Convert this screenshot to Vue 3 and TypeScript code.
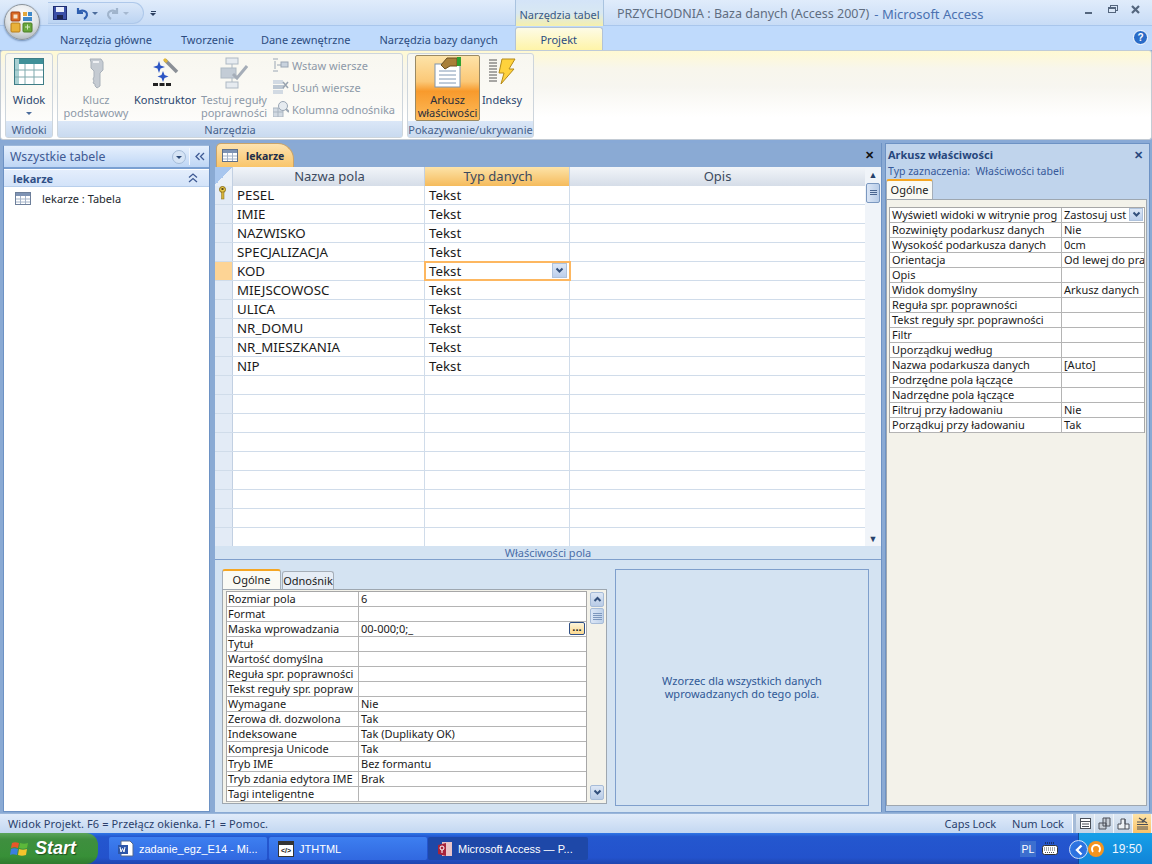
<template>
  <div class="app">
    <header class="titlebar">
      <div class="qat">
        <svg width="14" height="14" viewBox="0 0 14 14"><rect x="0.5" y="0.5" width="13" height="13" fill="#3a4fa8" stroke="#1e2c70"/><rect x="3" y="1" width="8" height="5" fill="#e8eefc"/><rect x="4" y="9" width="6" height="4" fill="#1c2450"/></svg>
        <svg class="undo" width="14" height="14" viewBox="0 0 14 14"><path d="M3 2v5h5M3 7c2-3 6-3 8-1 2 2 1 5-2 7" fill="none" stroke="#2f5fb0" stroke-width="2.2"/></svg>
        <span class="caret"></span>
        <svg class="undo" width="14" height="14" viewBox="0 0 14 14"><path d="M11 2v5H6M11 7C9 4 5 4 3 6c-2 2-1 5 2 7" fill="none" stroke="#a0b4cc" stroke-width="2.2"/></svg>
        <span class="caret dim"></span>
      </div>
      <span class="qat-more"><i></i><b></b></span>
      <div class="context-tab">Narzędzia tabel</div>
      <div class="title">
        <span class="doc-title">PRZYCHODNIA : Baza danych (Access 2007)</span>
        <span class="app-title">- Microsoft Access</span>
      </div>
      <div class="winbtns">
        <svg width="12" height="12" viewBox="0 0 12 12"><rect x="1" y="8" width="7" height="2" fill="#54667e"/></svg>
        <svg width="12" height="12" viewBox="0 0 12 12"><rect x="3.5" y="1.5" width="7" height="5" fill="none" stroke="#54667e"/><rect x="1.5" y="3.5" width="7" height="5" fill="#dbe8f8" stroke="#54667e"/><rect x="1" y="3" width="8" height="2" fill="#54667e"/></svg>
        <svg width="12" height="12" viewBox="0 0 12 12"><path d="M2 2l7 7M9 2L2 9" stroke="#54667e" stroke-width="2.2"/></svg>
      </div>
    </header>

    <nav class="tabsrow">
      <span v-for="t in tabs" :key="t" class="tab">{{ t }}</span>
      <span class="tab active">Projekt</span>
      <svg class="help" width="15" height="15" viewBox="0 0 15 15"><circle cx="7.5" cy="7.5" r="7" fill="#2a6cc8" stroke="#fff"/><text x="7.5" y="11" text-anchor="middle" font-size="10" font-weight="700" fill="#fff" font-family="Liberation Sans">?</text></svg>
    </nav>

    <section class="ribbon">
      <div class="group g-view">
        <div class="group-body">
          <div class="big">
            <svg class="ico" width="30" height="28" viewBox="0 0 30 28"><rect x="0.5" y="0.5" width="29" height="26" fill="#fff" stroke="#3d7d86"/><rect x="1" y="1" width="28" height="5" fill="#3f9098"/><rect x="1" y="1" width="4" height="25" fill="#a9d0d2"/><path d="M1 12h28M1 19h28M11 6v20M20 6v20" stroke="#7fa9ad" fill="none"/></svg>
            <span class="lbl">Widok</span>
            <span class="caret small"></span>
          </div>
        </div>
        <div class="group-name">Widoki</div>
      </div>

      <div class="group g-tools">
        <div class="group-body">
          <div class="big klucz dis">
            <svg class="ico" width="20" height="32" viewBox="0 0 20 32"><path d="M4 2h11l2 3v8l-3 3v13l-3 2-2-2v-2l-2-1 1-2-1-2 1-2v-6l-3-3V5z" fill="#c5cbd2" stroke="#a9b1ba"/><rect x="7" y="4" width="6" height="2" fill="#eef0f3"/></svg>
            <span class="lbl">Klucz<br />podstawowy</span>
          </div>
          <div class="big kons">
            <svg class="ico" width="28" height="32" viewBox="0 0 28 32"><path d="M8 4l1.5 4.5L14 10l-4.5 1.5L8 16l-1.5-4.5L2 10l4.500-1.500zM12 14l1.500 4 4 1.500-4 1.500-1.500 4-1.500-4-4-1.500 4-1.500z" fill="#2c55c4"/><path d="M14 3l12 12" stroke="#8a8f96" stroke-width="3.5"/><path d="M13 2l3 3" stroke="#e2b83a" stroke-width="3"/><rect x="2" y="26" width="5" height="3" fill="#222"/><rect x="8.5" y="26" width="5" height="3" fill="#222"/><rect x="15" y="26" width="5" height="3" fill="#222"/></svg>
            <span class="lbl">Konstruktor</span>
          </div>
          <div class="big test dis">
            <svg class="ico" width="28" height="32" viewBox="0 0 28 32"><rect x="6" y="1" width="12" height="6" fill="#e6ebf0" stroke="#aeb9c4"/><rect x="6" y="25" width="12" height="6" fill="#e6ebf0" stroke="#aeb9c4"/><path d="M12 7v18" stroke="#aeb9c4"/><rect x="1" y="11" width="15" height="10" fill="#c3ccd6" stroke="#aeb9c4"/><path d="M13 17l4 4 10-12" stroke="#a5adb8" stroke-width="3" fill="none"/></svg>
            <span class="lbl">Testuj reguły<br />poprawności</span>
          </div>
          <div class="small-col dis">
            <div class="small-btn">
              <svg width="16" height="16" viewBox="0 0 16 16"><path d="M0 2h5M0 14h5M2 4v8" stroke="#9aa6b4" fill="none"/><path d="M4 8h4" stroke="#9aa6b4"/><rect x="8" y="5" width="7" height="5" fill="#c9d3de" stroke="#9aa6b4"/></svg>
              <span>Wstaw wiersze</span>
            </div>
            <div class="small-btn">
              <svg width="16" height="16" viewBox="0 0 16 16"><rect x="0" y="1" width="10" height="4" fill="#d2dae3"/><rect x="0" y="6" width="11" height="4" fill="#bcc7d3"/><rect x="0" y="11" width="10" height="4" fill="#d2dae3"/><path d="M10 3l5 6M15 3l-5 6" stroke="#98a3af" stroke-width="1.5"/></svg>
              <span>Usuń wiersze</span>
            </div>
            <div class="small-btn">
              <svg width="16" height="16" viewBox="0 0 16 16"><rect x="0" y="7" width="10" height="9" fill="#d2dae3" stroke="#aab5c1"/><path d="M0 11h10M5 7v9" stroke="#aab5c1"/><circle cx="10" cy="5" r="4.5" fill="#e6ebf0" stroke="#9aa6b4"/><path d="M13 8l3 3" stroke="#9aa6b4" stroke-width="2"/></svg>
              <span>Kolumna odnośnika</span>
            </div>
          </div>
        </div>
        <div class="group-name">Narzędzia</div>
      </div>

      <div class="group g-show">
        <div class="group-body">
          <div class="big ark pressed">
            <svg class="ico" width="30" height="32" viewBox="0 0 30 32"><rect x="2" y="8" width="25" height="23" fill="#fff" stroke="#7f95ae"/><path d="M6 15h17M6 19h17M6 23h17M6 27h17" stroke="#8098b4"/><path d="M8 9l6-7h10v8h-7l-5 3z" fill="#a9803a" stroke="#6c5020"/><rect x="24" y="1" width="4" height="9" fill="#2fa02f"/></svg>
            <span class="lbl">Arkusz<br />właściwości</span>
          </div>
          <div class="big indeksy">
            <svg class="ico" width="28" height="32" viewBox="0 0 28 32"><path d="M1 3h8M1 6h8M1 9h8M1 12h8M1 15h8M1 18h8M1 21h8M1 24h8" stroke="#555" fill="none"/><path d="M14 2h13l-6 10h5L13 27l3-11h-5z" fill="#ffd23c" stroke="#b48a1a"/></svg>
            <span class="lbl">Indeksy</span>
          </div>
        </div>
        <div class="group-name">Pokazywanie/ukrywanie</div>
      </div>
    </section>

    <main class="workspace">
      <aside class="nav">
        <div class="nav-head">
          <span>Wszystkie tabele</span>
          <svg class="nav-drop" width="16" height="16" viewBox="0 0 16 16"><circle cx="8" cy="8" r="6.5" fill="#d6e4f5" stroke="#a5bcd8"/><path d="M5 7h6l-3 3z" fill="#2d4a78"/></svg>
          <i class="nav-sep"></i>
          <svg class="nav-chev" width="10" height="9" viewBox="0 0 10 9"><path d="M4.500 1L1 4.500 4.500 8M9 1L5.500 4.500 9 8" fill="none" stroke="#3f5a94" stroke-width="1.300"/></svg>
        </div>
        <div class="nav-group">
          <span>lekarze</span>
          <svg width="10" height="10" viewBox="0 0 10 10"><path d="M1 4.500L5 1l4 3.500M1 9l4-3.500L9 9" fill="none" stroke="#3f5a94" stroke-width="1.300"/></svg>
        </div>
        <div class="nav-item">
          <svg width="16" height="13" viewBox="0 0 16 13"><rect x="0.5" y="0.5" width="15" height="12" fill="#fff" stroke="#6d7f9a"/><rect x="1" y="1" width="14" height="3" fill="#7e93b4"/><path d="M1 7h14M1 10h14M5.500 4v8M10.500 4v8" stroke="#a4b3c8"/></svg>
          <span>lekarze : Tabela</span>
        </div>
      </aside>

      <section class="doc">
        <div class="doc-tabs">
          <div class="doc-tab">
            <svg width="16" height="13" viewBox="0 0 16 13"><rect x="0.5" y="0.5" width="15" height="12" fill="#fff" stroke="#5d6f8a"/><rect x="1" y="1" width="14" height="3" fill="#7e93b4"/><path d="M1 7h14M1 10h14M5.500 4v8M10.500 4v8" stroke="#a4b3c8"/></svg>
            <span>lekarze</span>
          </div>
          <span class="close dark">✕</span>
        </div>

        <div class="grid-wrap">
          <div class="grid">
            <div class="row head">
              <div class="sel corner"></div>
              <div class="c1">Nazwa pola</div>
              <div class="c2 hot">Typ danych</div>
              <div class="c3">Opis</div>
            </div>
            <div v-for="(r, i) in rows" :key="i" class="row" :class="{ current: r === 'KOD' }">
              <div class="sel">
                <svg v-if="i === 0" width="9" height="14" viewBox="0 0 9 14"><circle cx="4.5" cy="3.5" r="3" fill="#e8c94a" stroke="#8a6d1a"/><rect x="3.5" y="6" width="2.5" height="7" fill="#d4b23a" stroke="#8a6d1a" stroke-width="0.5"/><rect x="3.5" y="2" width="2" height="2" fill="#5a4a1a"/></svg>
              </div>
              <div class="c1">{{ r }}</div>
              <div class="c2">
                <span v-if="r">Tekst</span>
                <span v-if="r === 'KOD'" class="combo"><svg width="9" height="7" viewBox="0 0 9 7"><path d="M1.500 1.500l3 3 3-3" fill="none" stroke="#33507c" stroke-width="2"/></svg></span>
              </div>
              <div class="c3"></div>
            </div>
          </div>
          <div class="vscroll">
            <span class="arr">▲</span>
            <span class="thumb"><i></i></span>
            <span class="track"></span>
            <span class="arr">▼</span>
          </div>
        </div>

        <div class="fp-title">Właściwości pola</div>

        <div class="fp">
          <div class="fp-left">
            <div class="tabstrip">
              <span class="ptab on">Ogólne</span>
              <span class="ptab">Odnośnik</span>
            </div>
            <div class="fp-box">
              <div class="ptable">
                <div v-for="p in fieldProps" :key="p[0]" class="prow">
                  <div class="pk">{{ p[0] }}</div>
                  <div class="pv">
                    {{ p[1] }}
                    <span v-if="p[0] === 'Maska wprowadzania'" class="dots">...</span>
                  </div>
                </div>
              </div>
              <div class="pscroll">
                <span class="parr">
                  <svg width="9" height="7" viewBox="0 0 9 7"><path d="M1.500 5l3-3 3 3" fill="none" stroke="#33507c" stroke-width="2"/></svg>
                </span>
                <span class="pthumb"><i></i></span>
                <span class="track"></span>
                <span class="parr">
                  <svg width="9" height="7" viewBox="0 0 9 7"><path d="M1.500 1.500l3 3 3-3" fill="none" stroke="#33507c" stroke-width="2"/></svg>
                </span>
              </div>
            </div>
          </div>
          <div class="hint">Wzorzec dla wszystkich danych<br />wprowadzanych do tego pola.</div>
        </div>
      </section>

      <aside class="sheet">
        <div class="sheet-head">
          <span>Arkusz właściwości</span>
          <span class="close">✕</span>
        </div>
        <div class="sheet-sel">Typ zaznaczenia:&nbsp; Właściwości tabeli</div>
        <div class="sheet-tabs"><span class="ptab on">Ogólne</span></div>
        <div class="sheet-box">
          <div class="stable">
            <div v-for="p in tableProps" :key="p[0]" class="srow">
              <div class="sk">{{ p[0] }}</div>
              <div class="sv">
                {{ p[1] }}
                <span v-if="p[1] === 'Zastosuj ust'" class="combo s"><svg width="9" height="7" viewBox="0 0 9 7"><path d="M1.500 1.500l3 3 3-3" fill="none" stroke="#33507c" stroke-width="2"/></svg></span>
              </div>
            </div>
          </div>
        </div>
      </aside>
    </main>

    <footer class="status">
      <span class="status-text">Widok Projekt. F6 = Przełącz okienka. F1 = Pomoc.</span>
      <span class="lock caps">Caps Lock</span>
      <span class="lock num">Num Lock</span>
      <div class="views">
        <span class="vbtn"><svg width="13" height="13" viewBox="0 0 13 13"><rect x="1.5" y="1.5" width="10" height="10" fill="#fff" stroke="#4a4f58"/><path d="M1 4.500h11M3 7h7M3 9.500h7" stroke="#4a4f58"/></svg></span>
        <span class="vbtn"><svg width="13" height="13" viewBox="0 0 13 13"><path d="M5 1h7v8H8v3H1V6h4z" fill="#c8ced6" stroke="#4a4f58"/><path d="M5 6h3v3H5zM8 1v8" fill="none" stroke="#4a4f58"/></svg></span>
        <span class="vbtn"><svg width="13" height="13" viewBox="0 0 13 13"><path d="M1 12V7h3V2h4v5h4v5z" fill="#eef1f4" stroke="#4a4f58"/><path d="M8 2v10" stroke="#4a4f58"/></svg></span>
        <span class="vbtn on"><svg width="13" height="13" viewBox="0 0 13 13"><path d="M1 5h7M1 7.500h11M1 10h11M1 12h11" stroke="#4a4f58"/><path d="M3 1l8 5M10 1L6 5" stroke="#4a4f58" stroke-width="1.300"/></svg></span>
      </div>
    </footer>

    <footer class="taskbar">
      <div class="start">
        <svg width="20" height="19" viewBox="0 0 20 19"><path d="M2 4c2-1 4-1 7 0l-1 5c-3-1-4-1-7 0z" fill="#e8562a"/><path d="M10 4c3 1 5 1 8 0l-1 5c-3 1-5 1-8 0z" fill="#5cb83a"/><path d="M1 10c2-1 4-1 7 0l-1 6c-3-1-5-1-7 0z" fill="#3b7fe0"/><path d="M9 10c3 1 5 1 8 0l-1 6c-3 1-5 1-8 0z" fill="#f4c42c"/></svg>
        <span>Start</span>
      </div>
      <div class="task">
        <svg width="16" height="17" viewBox="0 0 16 17"><path d="M3 1h9l3 3v12H3z" fill="#fff" stroke="#54698c"/><rect x="0" y="5" width="10" height="9" fill="#2c55a8"/><path d="M2 7l1 5 1.500-3.500L6 12l1-5" stroke="#fff" fill="none"/></svg>
        <span>zadanie_egz_E14 - Mi...</span>
      </div>
      <div class="task">
        <svg width="16" height="16" viewBox="0 0 16 16"><rect x="0.5" y="0.5" width="15" height="15" fill="#fff" stroke="#333"/><rect x="1" y="1" width="14" height="3" fill="#333"/><text x="8" y="12" text-anchor="middle" font-size="7" font-weight="700" fill="#111" font-family="Liberation Sans">&lt;/&gt;</text></svg>
        <span>JTHTML</span>
      </div>
      <div class="task cur">
        <svg width="16" height="16" viewBox="0 0 16 16"><path d="M5 1h10v14H5z" fill="#e9c4c8"/><path d="M1 4l8-2v13l-8-2z" fill="#a8233a"/><circle cx="5" cy="7" r="2" fill="none" stroke="#fff"/><path d="M5 9v3" stroke="#fff"/></svg>
        <span>Microsoft Access — P...</span>
      </div>
      <div class="lang">PL</div>
      <svg class="kbd" width="16" height="13" viewBox="0 0 16 13"><path d="M3 1h10" stroke="#111" stroke-dasharray="1 1"/><rect x="0.5" y="3.5" width="15" height="9" rx="2" fill="#fff" stroke="#333"/><path d="M2 6h12M2 8h12M3 10.500h10" stroke="#555" stroke-dasharray="1 1"/></svg>
      <div class="tray">
        <span class="tray-back"><svg width="10" height="12" viewBox="0 0 10 12"><path d="M7.500 1.500L3 6l4.500 4.500" fill="none" stroke="#fff" stroke-width="2.400"/></svg></span>
        <span class="tray-o"><i></i></span>
        <span class="clock">19:50</span>
      </div>
    </footer>

    <div class="office-btn">
      <svg width="26" height="26" viewBox="0 0 26 26">
        <rect x="2" y="3" width="9" height="9" rx="1" fill="#d96a24" stroke="#a23f10"/>
        <rect x="4.5" y="5.5" width="4" height="4" fill="#f5e2c8"/>
        <rect x="14" y="3" width="4" height="4" fill="#e4a83c"/>
        <rect x="19" y="3" width="4" height="4" fill="#3f88c8"/>
        <rect x="14" y="8" width="9" height="4" fill="#3f88c8"/>
        <rect x="2" y="14" width="9" height="9" rx="1" fill="#e8b13a" stroke="#b87c18"/>
        <rect x="14" y="14" width="9" height="9" rx="1" fill="#69a83c" stroke="#4a7c24"/>
        <path d="M16 18h5M18.500 15.500v5" stroke="#d4eac0"/>
      </svg>
    </div>
  </div>
</template>

<script setup lang="ts">
const tabs: string[] = [
  "Narzędzia główne",
  "Tworzenie",
  "Dane zewnętrzne",
  "Narzędzia bazy danych",
];

const rows: string[] = [
  "PESEL", "IMIE", "NAZWISKO", "SPECJALIZACJA", "KOD",
  "MIEJSCOWOSC", "ULICA", "NR_DOMU", "NR_MIESZKANIA", "NIP",
  "", "", "", "", "", "", "", "", "",
];

// labels are written as far as the narrow columns show them
const fieldProps: [string, string][] = [
  ["Rozmiar pola", "6"],
  ["Format", ""],
  ["Maska wprowadzania", "00-000;0;_"],
  ["Tytuł", ""],
  ["Wartość domyślna", ""],
  ["Reguła spr. poprawności", ""],
  ["Tekst reguły spr. popraw", ""],
  ["Wymagane", "Nie"],
  ["Zerowa dł. dozwolona", "Tak"],
  ["Indeksowane", "Tak (Duplikaty OK)"],
  ["Kompresja Unicode", "Tak"],
  ["Tryb IME", "Bez formantu"],
  ["Tryb zdania edytora IME", "Brak"],
  ["Tagi inteligentne", ""],
];

const tableProps: [string, string][] = [
  ["Wyświetl widoki w witrynie prog", "Zastosuj ust"],
  ["Rozwinięty podarkusz danych", "Nie"],
  ["Wysokość podarkusza danych", "0cm"],
  ["Orientacja", "Od lewej do pra"],
  ["Opis", ""],
  ["Widok domyślny", "Arkusz danych"],
  ["Reguła spr. poprawności", ""],
  ["Tekst reguły spr. poprawności", ""],
  ["Filtr", ""],
  ["Uporządkuj według", ""],
  ["Nazwa podarkusza danych", "[Auto]"],
  ["Podrzędne pola łączące", ""],
  ["Nadrzędne pola łączące", ""],
  ["Filtruj przy ładowaniu", "Nie"],
  ["Porządkuj przy ładowaniu", "Tak"],
];
</script>

<style>
html, body {
  margin: 0;
  overflow: hidden;
}
</style>

<style scoped>
.app {
  position: relative;
  width: 1152px;
  height: 864px;
  overflow: hidden;
  display: flex;
  flex-direction: column;
  background: #88a9d6;
  font-family: "Noto Sans", "Open Sans", sans-serif;
  font-size: 11px;
  color: #1a1a1a;
}

/* title bar */
.titlebar {
  height: 26px;
  flex: none;
  display: flex;
  align-items: center;
  padding-left: 48px;
  background: linear-gradient(#e0ecfb, #c8dcf6);
  border-bottom: 1px solid #a9c6ec;
  box-sizing: border-box;
}
.qat {
  width: 96px;
  height: 22px;
  margin-top: 1px;
  display: flex;
  align-items: center;
  gap: 3px;
  padding-left: 5px;
  box-sizing: border-box;
  background: linear-gradient(#dbe8f9, #bcd4f2);
  border-radius: 0 11px 11px 0;
  border: 1px solid #aec8ea;
  border-left: 0;
}
.undo { margin-left: 5px; }
.caret {
  width: 0;
  height: 0;
  border: 3px solid transparent;
  border-top: 3px solid #4c6d9c;
  margin-top: 3px;
}
.caret.dim { border-top-color: #a5b8d0; }
.qat-more {
  width: 8px;
  margin-left: 5px;
  display: flex;
  flex-direction: column;
  align-items: center;
  gap: 1px;
  margin-top: 2px;
}
.qat-more i { width: 5px; height: 1px; background: #2b3f60; }
.qat-more b { width: 0; height: 0; border: 3px solid transparent; border-top: 3px solid #2b3f60; border-bottom: 0; }
.context-tab {
  margin-left: 358px;
  width: 89px;
  height: 26px;
  line-height: 30px;
  text-align: center;
  font-size: 11px;
  color: #3a5a88;
  background: linear-gradient(#d4e4f8, #d8e8f2 50%, #f6f0ac);
  border-left: 1px solid #a9c3df;
  border-right: 1px solid #a9c3df;
  box-sizing: border-box;
}
.title {
  margin-left: 13px;
  margin-top: 2px;
  font-size: 12.5px;
  display: flex;
  gap: 5px;
}
.doc-title { color: #5f6d80; }
.app-title { color: #4a71b0; font-size: 13px; }
.winbtns {
  margin-left: auto;
  display: flex;
  gap: 11px;
  padding-right: 10px;
  margin-top: -6px;
}

/* tab row */
.tabsrow {
  height: 24px;
  flex: none;
  display: flex;
  align-items: flex-end;
  position: relative;
  background: #bfdafc;
  padding-left: 60px;
  box-sizing: border-box;
}
.tab {
  color: #2c4c80;
  font-size: 11px;
  height: 22px;
  line-height: 23px;
  margin-right: 29px;
  white-space: nowrap;
}
.tab:nth-child(2) { margin-right: 27px; }
.tab:nth-child(3) { margin-right: 29px; }
.tab:nth-child(4) { margin-right: 17px; }
.tab.active {
  width: 88px;
  height: 23px;
  margin: 0;
  text-align: center;
  background: linear-gradient(#fdfbe6, #fef4a8);
  border: 1px solid #b3c3d6;
  border-bottom: 0;
  border-radius: 3px 3px 0 0;
  box-sizing: border-box;
  color: #2c4c80;
}
.help { position: absolute; right: 4px; top: 4px; }

/* ribbon */
.ribbon {
  height: 90px;
  flex: none;
  display: flex;
  gap: 4px;
  padding: 2px 0 0 4px;
  box-sizing: border-box;
  margin-bottom: 3px;
  background: linear-gradient(#fff9d2, #f8f6ec 20%, #f7f6f0 40%, #fff 75%);
  border: 1px solid #c3cbd4;
  border-top: 1px solid #bfcbd8;
  border-radius: 3px;
}
.group {
  height: 85px;
  display: flex;
  flex-direction: column;
  border: 1px solid #cdd5dc;
  border-radius: 3px;
  box-sizing: border-box;
  background: linear-gradient(#f8f7f0, #fbfaf6 60%, #fff);
}
.g-view { width: 48px; }
.g-tools { width: 346px; }
.g-show { width: 127px; }
.group-body {
  flex: 1;
  display: flex;
  min-height: 0;
}
.group-name {
  height: 16px;
  line-height: 17px;
  text-align: center;
  font-size: 11px;
  color: #46618c;
  background: linear-gradient(#dbe7f7, #c9daef);
}
.big {
  display: flex;
  flex-direction: column;
  align-items: center;
  color: #2a466f;
  line-height: 13px;
  text-align: center;
  white-space: nowrap;
  box-sizing: border-box;
  font-size: 11px;
}
.big .ico { margin: 3px 0 4px; flex: none; }
.big.dis, .small-col.dis { color: #8d99a8; }
.g-view .big { width: 100%; }
.g-view .ico { margin: 4px 0 7px; }
.caret.small { margin-top: 6px; border-top-color: #4c6d9c; }
.klucz { width: 76px; }
.kons { width: 62px; }
.test { width: 76px; }
.small-col {
  display: flex;
  flex-direction: column;
  margin-left: 1px;
}
.small-btn {
  height: 22px;
  display: flex;
  align-items: center;
  gap: 3px;
  white-space: nowrap;
  font-size: 11px;
}
.ark {
  width: 65px;
  height: 66px;
  margin: 1px 0 0 7px;
}
.ark.pressed {
  background: linear-gradient(#fde3a8, #fbc877 40%, #f89a2c 55%, #fdbb5a);
  border: 1px solid #9a8a64;
  border-radius: 2px;
  color: #2a2f3c;
}
.ark .ico { margin: 0 0 3px; }
.ark .lbl { margin-top: 2px; }
.indeksy { width: 44px; }

/* workspace */
.workspace {
  flex: 1;
  min-height: 0;
  display: flex;
  padding: 0 2px 1px 3px;
  box-sizing: border-box;
  background: #8aaad4;
}
.nav {
  width: 207px;
  flex: none;
  background: #fff;
  border: 1px solid #6d92c4;
  border-top: 1px solid #9db8dc;
  box-sizing: border-box;
  margin-top: 2px;
}
.nav-head {
  height: 21px;
  display: flex;
  align-items: center;
  padding: 0 4px 0 6px;
  font-size: 12.3px;
  color: #3f5a94;
  background: linear-gradient(#e6f0fd, #bed6f5);
  border-bottom: 2px solid #7aa0d2;
}
.nav-drop { margin-left: auto; }
.nav-sep { width: 1px; height: 17px; margin: 0 5px 0 2px; background: #f4f8fe; }
.nav-group {
  height: 17px;
  margin-top: 1px;
  display: flex;
  justify-content: space-between;
  align-items: center;
  padding: 0 11px 0 9px;
  font-weight: 700;
  font-size: 11px;
  color: #2f4f86;
  background: linear-gradient(#e4eefc, #d3e3f9);
  border-bottom: 1px solid #b8cfec;
  box-sizing: border-box;
}
.nav-item {
  display: flex;
  align-items: center;
  gap: 11px;
  padding: 3px 0 0 11px;
  font-size: 11px;
  height: 17px;
  color: #23282f;
}

.doc {
  width: 667px;
  margin-left: 5px;
  flex: none;
  display: flex;
  flex-direction: column;
  background: #d4e3f2;
  box-sizing: border-box;
  border-right: 1px solid #6d92c4;
}
.doc-tabs {
  height: 24px;
  flex: none;
  display: flex;
  align-items: flex-end;
  background: #8aaad4;
  padding-left: 1px;
  position: relative;
}
.doc-tab {
  width: 78px;
  height: 24px;
  display: flex;
  align-items: center;
  gap: 8px;
  padding-left: 5px;
  box-sizing: border-box;
  font-weight: 700;
  font-size: 10.5px;
  color: #1d2e4a;
  background: linear-gradient(#fde3b0, #f9c56a);
  border-radius: 5px 16px 0 0;
  border: 1px solid #c8a36a;
  border-bottom: 0;
}
.close {
  margin-left: auto;
  color: #27477d;
  font-weight: 700;
  font-size: 11px;
}
.close.dark {
  position: absolute;
  right: 7px;
  top: 4px;
  color: #111;
}
.grid-wrap {
  height: 379px;
  flex: none;
  display: flex;
  background: #fff;
}
.grid { flex: 1; overflow: hidden; }
.row {
  display: flex;
  height: 19px;
  font-size: 13.3px;
  line-height: 18px;
  box-sizing: border-box;
  border-bottom: 1px solid #d0dcea;
  color: #1a1a1a;
}
.row.head {
  height: 19px;
  border-bottom: 0;
  text-align: center;
  color: #3c4a5e;
  font-size: 13px;
  background: linear-gradient(#f2f5f9, #d5dde8);
}
.sel {
  width: 18px;
  flex: none;
  box-sizing: border-box;
  background: #e3ebf6;
  border-right: 1px solid #c2d0e2;
  padding: 0 0 0 3px;
  line-height: 0;
}
.sel.corner {
  padding: 0;
  background: linear-gradient(135deg, #a8c6ee 50%, #eaf0f8 50%);
}
.row.current .sel { background: #fdd495; }
.c1 {
  width: 192px;
  flex: none;
  padding-left: 4px;
  box-sizing: border-box;
  border-right: 1px solid #d0dcea;
}
.c2 {
  width: 145px;
  flex: none;
  padding-left: 4px;
  box-sizing: border-box;
  border-right: 1px solid #d0dcea;
  position: relative;
}
.c3 { flex: 1; }
.head .c1, .head .c2 { padding-left: 2px; border-right: 1px solid #c2d0e2; }
.c2.hot { background: linear-gradient(#fde3a8, #f5bb5c); color: #3c4a5e; }
.row.current .c2 {
  outline: 2px solid #fdb760;
  outline-offset: -1px;
}
.combo {
  position: absolute;
  right: 2px;
  top: 1px;
  width: 15px;
  height: 15px;
  display: flex;
  align-items: center;
  justify-content: center;
  background: linear-gradient(#dde7f6, #bccfec);
  border: 1px solid #aec2dc;
  box-sizing: border-box;
}
.vscroll {
  width: 16px;
  flex: none;
  display: flex;
  flex-direction: column;
  background: #f0f4f9;
  color: #26416b;
  font-size: 9px;
  text-align: center;
}
.arr { height: 15px; line-height: 15px; }
.thumb {
  height: 18px;
  margin: 1px 1px 0 1px;
  border: 1px solid #7b98c0;
  border-radius: 2px;
  background: linear-gradient(90deg, #dbe6f6, #b9cde8);
  display: flex;
  align-items: center;
  justify-content: center;
}
.thumb i {
  width: 7px;
  height: 6px;
  background: repeating-linear-gradient(#4a6690 0 1px, transparent 1px 2px);
}
.track { flex: 1; }
.fp-title {
  height: 13px;
  flex: none;
  line-height: 13px;
  text-align: center;
  color: #4a6ea8;
  font-size: 11px;
  border-bottom: 1px solid #7f9fcc;
  background: #d4e3f2;
}
.fp {
  flex: 1;
  min-height: 0;
  display: flex;
  padding: 9px 12px 6px 7px;
  gap: 8px;
}
.fp-left {
  width: 385px;
  flex: none;
  display: flex;
  flex-direction: column;
  margin-bottom: 2px;
}
.tabstrip { height: 20px; display: flex; align-items: flex-end; flex: none; }
.ptab {
  width: 52px;
  height: 18px;
  line-height: 17px;
  text-align: center;
  font-size: 11px;
  background: #e6edf6;
  color: #1a1a1a;
  box-sizing: border-box;
  border: 1px solid #a5aeb8;
  border-bottom: 0;
  border-radius: 3px 3px 0 0;
  margin-left: 1px;
}
.ptab.on {
  width: 59px;
  height: 20px;
  line-height: 18px;
  background: #fafaf4;
  border-top: 2px solid #f5a623;
  margin-left: 0;
}
.sheet-tabs .ptab.on { width: 47px; }
.fp-box {
  flex: 1;
  min-height: 0;
  display: flex;
  background: #f3f2ea;
  border: 1px solid #9ea7b0;
  padding: 1px 2px 3px 3px;
}
.ptable {
  flex: 1;
  align-self: flex-start;
  background: #fff;
  border: 1px solid #a7a7a7;
  border-bottom: 0;
}
.prow {
  display: flex;
  height: 15px;
  line-height: 14px;
  font-size: 11px;
  box-sizing: border-box;
  border-bottom: 1px solid #b4b4b4;
}
.pk {
  width: 132px;
  flex: none;
  padding-left: 1px;
  box-sizing: border-box;
  border-right: 1px solid #b4b4b4;
  overflow: hidden;
  white-space: nowrap;
}
.pv { flex: 1; padding-left: 2px; position: relative; white-space: nowrap; }
.dots {
  position: absolute;
  right: 1px;
  top: 0;
  width: 16px;
  height: 13px;
  line-height: 8px;
  text-align: center;
  font-weight: 700;
  background: linear-gradient(#fdf4da, #fbd98f);
  border: 1px solid #2f4f86;
  border-radius: 2px;
  box-sizing: border-box;
}
.pscroll {
  width: 14px;
  margin-left: 3px;
  padding-top: 1px;
  flex: none;
  display: flex;
  flex-direction: column;
}
.parr {
  height: 15px;
  display: flex;
  align-items: center;
  justify-content: center;
  background: linear-gradient(#dde7f5, #b8cbe6);
  border: 1px solid #a7bcd8;
  border-radius: 2px;
  box-sizing: border-box;
}
.pthumb {
  height: 16px;
  margin-top: 1px;
  background: linear-gradient(90deg, #dbe6f6, #bfd2ea);
  border: 1px solid #a7bcd8;
  border-radius: 2px;
  box-sizing: border-box;
  display: flex;
  align-items: center;
  justify-content: center;
}
.pthumb i {
  width: 9px;
  height: 7px;
  background: repeating-linear-gradient(#7d97bd 0 1px, transparent 1px 2px);
}
.hint {
  flex: 1;
  padding-top: 104px;
  box-sizing: border-box;
  text-align: center;
  font-size: 11px;
  line-height: 13px;
  color: #2f5896;
  border: 1px solid #7f9fcc;
}

.sheet {
  width: 265px;
  min-width: 0;
  flex: none;
  margin-left: 3px;
  display: flex;
  flex-direction: column;
  background: #c0d4ec;
  border: 1px solid #6d92c4;
  box-sizing: border-box;
  padding: 0 2px 5px 0;
}
.sheet-head {
  height: 21px;
  flex: none;
  display: flex;
  align-items: center;
  padding: 0 4px 0 2px;
  font-weight: 700;
  font-size: 11px;
  color: #27477d;
}
.sheet-sel {
  height: 14px;
  flex: none;
  line-height: 12px;
  padding-left: 2px;
  font-size: 10.5px;
  color: #36599a;
}
.sheet-tabs { height: 20px; flex: none; display: flex; align-items: flex-end; }
.sheet-box {
  flex: 1;
  min-height: 0;
  background: #f3f2ea;
  border: 1px solid #9ea7b0;
  padding: 7px 1px 0 2px;
  overflow: hidden;
}
.stable {
  background: #fff;
  border: 1px solid #a7a7a7;
  border-bottom: 0;
}
.srow {
  display: flex;
  height: 15px;
  line-height: 14px;
  font-size: 11px;
  box-sizing: border-box;
  border-bottom: 1px solid #b4b4b4;
}
.sk {
  width: 172px;
  flex: none;
  padding-left: 2px;
  box-sizing: border-box;
  border-right: 1px solid #b4b4b4;
  overflow: hidden;
  white-space: nowrap;
}
.sv { flex: 1; padding-left: 2px; position: relative; overflow: hidden; white-space: nowrap; }
.combo.s { right: 1px; top: 0; width: 14px; height: 13px; }

/* status bar */
.status {
  height: 20px;
  flex: none;
  display: flex;
  align-items: center;
  padding-left: 8px;
  font-size: 11px;
  color: #2a3f6b;
  background: linear-gradient(#e0ebfa, #c3d7f1);
  border-top: 1px solid #9ab6da;
  box-sizing: border-box;
}
.status-text { letter-spacing: 0.1px; }
.caps { margin-left: auto; }
.num { margin-left: 16px; margin-right: 8px; }
.views {
  height: 100%;
  display: flex;
  padding-left: 3px;
  border-left: 1px solid #fff;
  background: #a6bcd8;
  box-sizing: border-box;
}
.vbtn {
  width: 18px;
  display: flex;
  align-items: center;
  justify-content: center;
  background: linear-gradient(#dde7f3, #c5d4e6);
  border-right: 1px solid #f1f5fa;
}
.vbtn.on { background: linear-gradient(#fde3a8, #f9c267); }

/* taskbar */
.taskbar {
  height: 31px;
  flex: none;
  position: relative;
  display: flex;
  align-items: center;
  background: linear-gradient(#2e76e6 0, #2457cf 12%, #2352cc 80%, #1e46b0);
  color: #fff;
  font-family: "Liberation Sans", sans-serif;
  font-size: 11px;
}
.start {
  width: 98px;
  height: 31px;
  flex: none;
  display: flex;
  align-items: center;
  gap: 5px;
  padding-left: 10px;
  box-sizing: border-box;
  background: linear-gradient(#5ba55b, #3f8f3f 20%, #389038 75%, #2f7a2f);
  border-radius: 0 12px 12px 0;
  font-weight: 700;
  font-style: italic;
  font-size: 18px;
  text-shadow: 1px 1px 1px #1e4f1e;
}
.task {
  width: 158px;
  height: 23px;
  margin-left: 2px;
  flex: none;
  display: flex;
  align-items: center;
  gap: 5px;
  padding-left: 9px;
  box-sizing: border-box;
  border-radius: 2px;
  background: linear-gradient(#3d7ff0, #3168e0);
  white-space: nowrap;
}
.start + .task { margin-left: 11px; }
.task.cur { background: #1e48a8; margin-left: 1px; width: 160px; }
.lang {
  margin-left: auto;
  width: 16px;
  height: 16px;
  line-height: 16px;
  font-size: 10.5px;
  text-align: center;
  background: #3c6fcf;
  margin-right: 6px;
}
.kbd { margin-right: 20px; flex: none; }
.tray {
  width: 74px;
  height: 31px;
  flex: none;
  display: flex;
  align-items: center;
  box-sizing: border-box;
  background: linear-gradient(#17a0e8, #1184d8);
  border-left: 1px solid #0f4a9a;
  position: relative;
}
.tray-back {
  position: absolute;
  left: -10px;
  top: 7px;
  width: 19px;
  height: 19px;
  border-radius: 50%;
  background: radial-gradient(#2a66d8, #2f7fe8);
  border: 1px solid #cfe0fa;
  box-sizing: border-box;
  display: flex;
  align-items: center;
  justify-content: center;
}
.tray-o {
  margin-left: 9px;
  width: 16px;
  height: 16px;
  border-radius: 50%;
  background: #f5941e;
  display: flex;
  align-items: center;
  justify-content: center;
}
.tray-o i {
  width: 6px;
  height: 6px;
  border: 2px solid #fff;
  border-bottom-color: transparent;
  border-radius: 50%;
}
.clock { margin-left: 8px; font-size: 12px; color: #eef6ff; }

/* office orb lies over the title and tab rows */
.office-btn {
  position: absolute;
  left: 4px;
  top: 4px;
  width: 36px;
  height: 36px;
  border-radius: 50%;
  display: flex;
  align-items: center;
  justify-content: center;
  background: radial-gradient(circle at 50% 30%, #fff, #dfe3e6 55%, #9aa3aa);
  border: 1px solid #8c949b;
  box-sizing: border-box;
  box-shadow: 0 1px 2px #6f8cb4;
}
</style>
